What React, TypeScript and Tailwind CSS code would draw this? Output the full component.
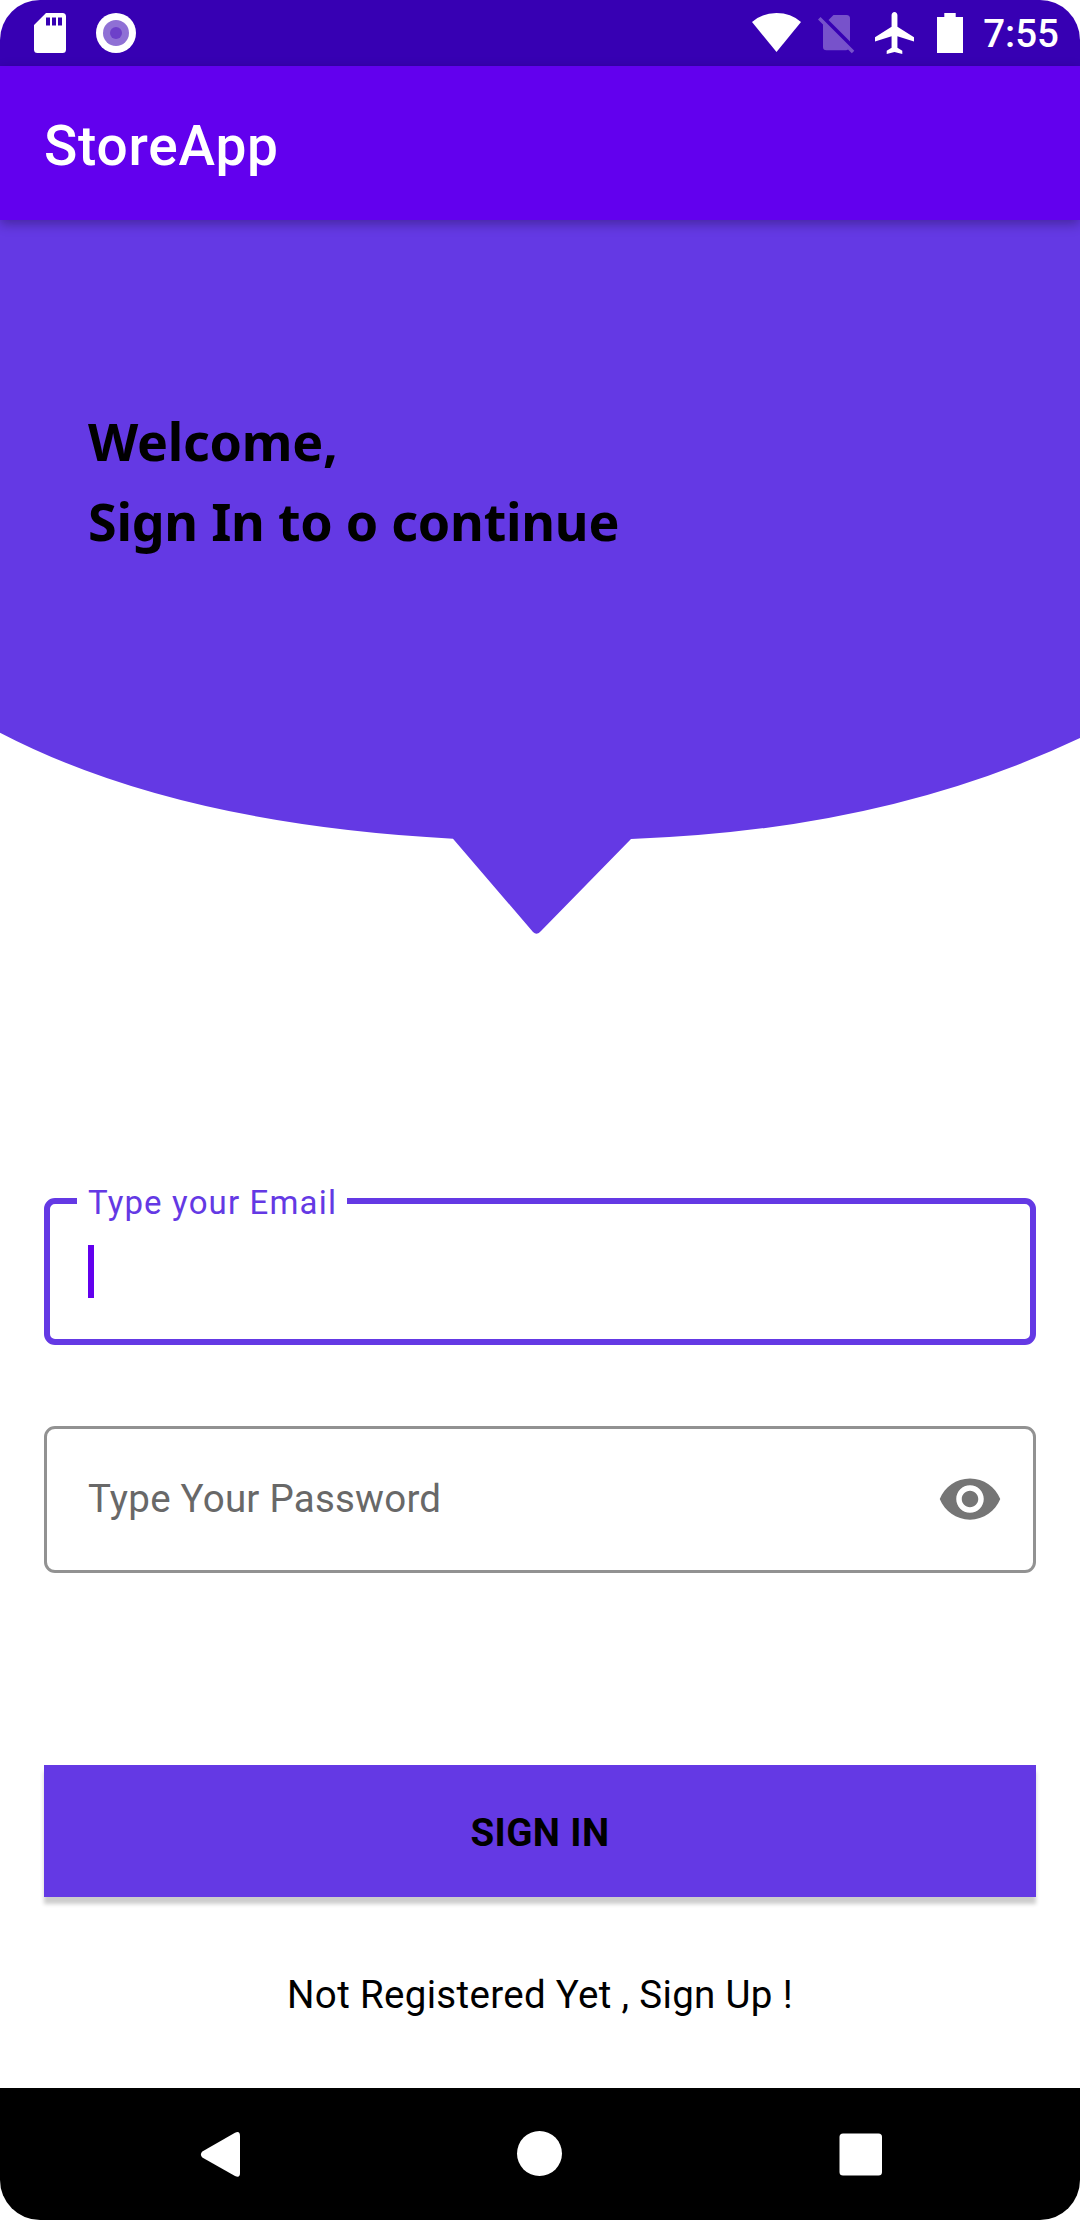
import React from "react";
import { MdVisibility } from "react-icons/md";

function StatusBar() {
  return (
    <div className="flex h-[66px] shrink-0 items-center justify-between bg-[#3700b3]">
      <svg width="150" height="66" viewBox="0 0 150 66">
        <path fill="#fff" fillRule="evenodd" d="M46 13H62.5Q66 13 66 16.500V49.500Q66 53 62.500 53H37.500Q34 53 34 49.500V25ZM46 17.500V25.500H50V17.500ZM52 17.500V25.500H56V17.500ZM58 17.500V25.500H62V17.500Z" />
        <circle cx="116" cy="33" r="20" fill="#fff" />
        <circle cx="116" cy="33" r="13" fill="#8f70d5" />
        <circle cx="116" cy="33" r="6" fill="#6d40c9" />
      </svg>
      <div className="flex items-center">
        <svg width="243" height="66" viewBox="740 0 243 66">
          <path fill="#fff" d="M752 22Q762 13 776.500 13T801 22L776.500 52Z" />
          <g fill="#fff" fillOpacity="0.32">
            <path d="M833.500 15H846.500Q850 15 850 18.500V41.500L828.500 20Z" />
            <path d="M818 19.500L820.500 17L854.300 50.800L851.800 53.300L848 49.500Q847.200 50.300 846 50.300H826.500Q823 50.300 823 47V24.500Z" />
          </g>
          <svg x="875" y="12" width="39" height="42" viewBox="2 2 20 20" preserveAspectRatio="none">
            <path fill="#fff" d="M22 16v-2l-8.500-5V3.500C13.500 2.670 12.830 2 12 2s-1.500.670-1.500 1.500V9L2 14v2l8.500-2.500V19L8 20.500V22l4-1 4 1v-1.500L13.500 19v-5.500z" />
          </svg>
          <path fill="#fff" d="M944.300 13H955.700V17H963V53H937V17H944.300Z" />
        </svg>
        <span className="mr-[21px] pt-[2px] text-[38.500px] font-medium leading-[66px] text-white">7:55</span>
      </div>
    </div>
  );
}

function Hero() {
  return (
    <div className="relative h-[716px] shrink-0">
      <svg className="absolute inset-0" width="1080" height="716" viewBox="0 220 1080 716">
        <path fill="#6439e4" d="M0 220H1080V738Q886 830 631 839L541 931Q537 936 533 932L453 838.700Q175 824 0 732.700Z" />
      </svg>
      <div className="relative flex flex-col pl-[88px] pt-[181px] font-['Noto_Sans'] text-[52px] font-bold leading-[80px] tracking-[-0.25px] text-black">
        <span>Welcome,</span>
        <span>Sign In to o continue</span>
      </div>
    </div>
  );
}

export default function App() {
  return (
    <div className="h-[2220px] w-[1080px] bg-white">
      <div className="flex h-full flex-col overflow-hidden rounded-[40px] bg-white font-[Roboto,sans-serif]">
        <StatusBar />
        <header className="relative z-10 flex h-[154px] shrink-0 items-center bg-[#6200ee] pl-11 pt-[7px] shadow-[0_4px_11px_rgba(0,0,0,0.3)]">
          <h1 className="text-[55px] font-medium leading-none tracking-[0.8px] text-white">StoreApp</h1>
        </header>
        <Hero />
        <form className="flex flex-col px-11 pt-[262px]">
          <div className="relative h-[147px] rounded-[11px] border-[6px] border-[#6439e4]">
            <label className="absolute -top-[22px] left-[27px] w-[270px] whitespace-nowrap bg-white px-[11px] text-[33px] leading-[42px] tracking-[1.150px] text-[#6439e4]">
              Type your Email
            </label>
            <div className="ml-[38px] mt-[41px] h-[53px] w-[6px] bg-[#6200ee]" />
          </div>
          <div className="mt-[81px] flex h-[147px] items-center justify-between rounded-[11px] border-[3px] border-[#929292] pb-[2px] pl-[41px] pr-[30px]">
            <span className="text-[38.500px] tracking-[0.230px] text-[#686868]">Type Your Password</span>
            <MdVisibility size={66} color="#757575" />
          </div>
          <button
            type="button"
            className="mt-[192px] flex h-[132px] items-center justify-center bg-[#6439e4] pt-[3px] text-[38.500px] font-bold tracking-[0.400px] text-black shadow-[0_7px_4px_rgba(0,0,0,0.2)]"
          >
            SIGN IN
          </button>
          <a className="mt-[72px] text-center text-[38.500px] leading-[52px] tracking-[0.320px] text-black">Not Registered Yet , Sign Up !</a>
        </form>
        <nav className="mt-auto h-[132px] shrink-0 bg-black">
          <svg width="1080" height="132" viewBox="0 2088 1080 132" fill="#fff">
            <path d="M202.300 2151.500L235 2132.800Q240 2130.500 240 2136V2173Q240 2178.500 235 2176L202.300 2157.500Q199.500 2154.500 202.300 2151.500Z" />
            <circle cx="539.500" cy="2153.500" r="22.500" />
            <rect x="839.500" y="2133.500" width="42.500" height="42" rx="3.500" />
          </svg>
        </nav>
      </div>
    </div>
  );
}
